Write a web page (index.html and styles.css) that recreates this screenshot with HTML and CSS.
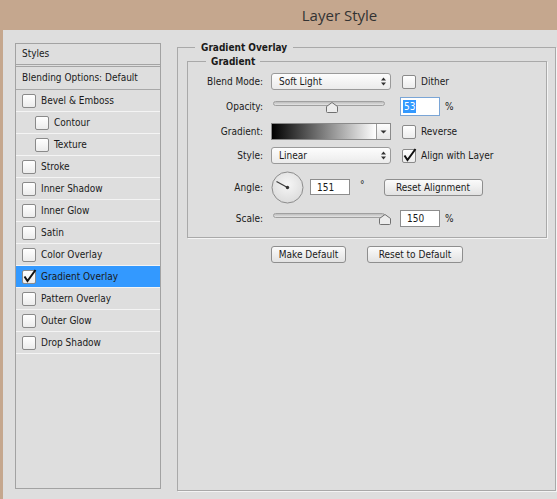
FILE: index.html
```html
<!DOCTYPE html>
<html>
<head>
<meta charset="utf-8" />
<title>Layer Style</title>
<link rel="stylesheet" href="styles.css">
</head>
<body>
<div class="titlebar">Layer Style</div>
<div class="dialog">

<div class="styles-list">
	<div class="list-head">Styles</div>
	<div class="list-blend">Blending Options: Default</div>
	<div class="list-item"><span class="cb"></span>Bevel &amp; Emboss</div>
	<div class="list-item sub"><span class="cb"></span>Contour</div>
	<div class="list-item sub"><span class="cb"></span>Texture</div>
	<div class="list-item"><span class="cb"></span>Stroke</div>
	<div class="list-item"><span class="cb"></span>Inner Shadow</div>
	<div class="list-item"><span class="cb"></span>Inner Glow</div>
	<div class="list-item"><span class="cb"></span>Satin</div>
	<div class="list-item"><span class="cb"></span>Color Overlay</div>
	<div class="list-item selected"><span class="cb"><svg class="tick" width="14" height="14" viewBox="0 0 14 14"><path d="M2.5 6.5 L5.5 11 L13.5 0" /></svg></span>Gradient Overlay</div>
	<div class="list-item"><span class="cb"></span>Pattern Overlay</div>
	<div class="list-item"><span class="cb"></span>Outer Glow</div>
	<div class="list-item"><span class="cb"></span>Drop Shadow</div>
</div>

<div class="main">
<fieldset class="group outer">
	<legend>Gradient Overlay</legend>
	<fieldset class="group inner">
		<legend>Gradient</legend>
		<div class="form">
			<!-- blend mode -->
			<div class="lbl">Blend Mode:</div>
			<div class="select"><span>Soft Light</span>
				<svg width="7" height="9" viewBox="0 0 7 9"><path d="M3.5 0.5 L6 3.5 H1 Z M1 5.5 H6 L3.5 8.5 Z" /></svg></div>
			<div class="opt"><span class="cb"></span>Dither</div>

			<!-- opacity -->
			<div class="lbl">Opacity:</div>
			<div class="slider"><div class="track"></div>
				<svg class="thumb" style="left:53%" width="12" height="11" viewBox="0 0 12 11"><path d="M0.5 4.5 L6 0.5 L11.5 4.5 V9.5 Q11.5 10.5 10.5 10.5 H1.5 Q0.5 10.5 0.5 9.5 Z" /></svg></div>
			<div class="opt"><span class="field tall focus"><span class="sel">53</span></span><span class="unit">%</span></div>

			<!-- gradient -->
			<div class="lbl">Gradient:</div>
			<div class="gradient"><div class="ramp"></div><div class="drop"><svg width="7" height="4" viewBox="0 0 7 4"><path d="M0.5 0.5 H6.5 L3.5 3.5 Z" /></svg></div></div>
			<div class="opt"><span class="cb"></span>Reverse</div>

			<!-- style -->
			<div class="lbl">Style:</div>
			<div class="select"><span>Linear</span>
				<svg width="7" height="9" viewBox="0 0 7 9"><path d="M3.5 0.5 L6 3.5 H1 Z M1 5.5 H6 L3.5 8.5 Z" /></svg></div>
			<div class="opt"><span class="cb"><svg class="tick" width="14" height="14" viewBox="0 0 14 14"><path d="M2.5 6.5 L5.5 11 L13.5 0" /></svg></span>Align with Layer</div>

			<!-- angle -->
			<div class="lbl">Angle:</div>
			<div class="angle">
				<svg class="dial" width="33" height="33" viewBox="0 0 33 33">
					<defs><radialGradient id="dialbg" cx="50%" cy="40%" r="60%"><stop offset="0" stop-color="#f6f6f6" /><stop offset="1" stop-color="#dcdcdc" /></radialGradient></defs>
					<circle cx="16.5" cy="16.5" r="15.5" fill="url(#dialbg)" stroke="#8c8c8c" />
					<line x1="16.5" y1="16.5" x2="5.5" y2="10.4" stroke="#3a3a3a" stroke-width="1.2" />
					<circle cx="16.5" cy="16.5" r="1.7" fill="#333" />
				</svg>
				<span class="field">151</span>
				<span class="deg">°</span>
				<span class="btn reset-align">Reset Alignment</span>
			</div>

			<!-- scale -->
			<div class="lbl">Scale:</div>
			<div class="slider"><div class="track"></div>
				<svg class="thumb" style="left:100%" width="12" height="11" viewBox="0 0 12 11"><path d="M0.5 4.5 L6 0.5 L11.5 4.5 V9.5 Q11.5 10.5 10.5 10.5 H1.5 Q0.5 10.5 0.5 9.5 Z" /></svg></div>
			<div class="opt"><span class="field">150</span><span class="unit">%</span></div>
		</div>
	</fieldset>
	<div class="buttons">
		<span class="btn make-default">Make Default</span>
		<span class="btn reset-default">Reset to Default</span>
	</div>
</fieldset>
</div>

</div>
</body>
</html>
```

FILE: styles.css
```css
html, body {
	margin: 0;
	height: 499px;
	overflow: hidden;
}
body {
	width: 557px;
	display: flex;
	flex-direction: column;
	background: #c5a78e;
	font-family: "DejaVu Sans Condensed", "Liberation Sans", sans-serif;
	font-size: 10px;
	color: #1a1a1a;
}
.titlebar {
	height: 30px;
	flex: none;
	box-sizing: border-box;
	padding-left: 122px;
	display: flex;
	align-items: center;
	justify-content: center;
	font-family: "Open Sans", "Noto Sans", sans-serif;
	font-size: 15px;
	color: #333333;
}
.dialog {
	flex: 1;
	min-height: 0;
	margin-left: 3px;
	background: #dedede;
	display: flex;
	align-items: stretch;
	padding: 13px 0 10px 12px;
}

/* left list */
.styles-list {
	width: 146px;
	box-sizing: border-box;
	border: 1px solid #a2a2a2;
}
.list-head {
	height: 20px;
	line-height: 20px;
	padding-left: 6px;
	border-bottom: 3px double #a4a4a4;
}
.list-blend {
	height: 22px;
	line-height: 22px;
	padding-left: 6px;
	border-bottom: 1px solid #a8a8a8;
}
.list-item {
	height: 21px;
	display: flex;
	align-items: center;
	padding-left: 6px;
	border-bottom: 1px solid #f4f4f4;
}
.list-item.sub {
	padding-left: 19px;
}
.list-item.selected {
	background: #3399ff;
}
.cb {
	width: 14px;
	height: 14px;
	box-sizing: border-box;
	border: 1px solid #8a8a8a;
	border-radius: 2px;
	background: linear-gradient(#ffffff, #ececec);
	margin-right: 5px;
	flex: none;
	position: relative;
}
.tick {
	position: absolute;
	left: -1px;
	top: -1px;
	overflow: visible;
}
.tick path {
	fill: none;
	stroke: #111111;
	stroke-width: 2;
}

/* right side */
.main {
	margin: -2px 0 -2px 16px;
	display: flex;
	flex-direction: column;
}
.group {
	margin: 0;
	border: 1px solid #a9a9a9;
	box-shadow: 1px 1px 0 #f4f4f4;
	min-inline-size: 0;
}
.group legend {
	font-weight: bold;
	line-height: 13px;
}
.outer {
	flex: 1;
	width: 379px;
	box-sizing: border-box;
	padding: 0 8px 0 9px;
}
.outer > legend {
	padding: 0 6px;
	margin-left: 8px;
}
.inner {
	margin-top: 1px;
	padding: 5px 0 10px 0;
}
.inner > legend {
	padding: 0 5px;
	margin-left: 18px;
}
.form {
	display: grid;
	grid-template-columns: 83px 131px 1fr;
	grid-template-rows: 17px 19px 17px 17px 32px 17px;
	row-gap: 7px;
	align-items: center;
}
.lbl {
	text-align: right;
	padding-right: 8px;
}
.select {
	width: 120px;
	height: 17px;
	box-sizing: border-box;
	border: 1px solid #9a9a9a;
	border-radius: 3px;
	background: linear-gradient(#fdfdfd, #ebebeb);
	display: flex;
	align-items: center;
	justify-content: space-between;
	padding: 0 3px 0 7px;
}
.select path,
.drop path {
	fill: #333333;
}
.opt {
	display: flex;
	align-items: center;
}
.slider {
	position: relative;
	height: 19px;
	margin-left: 2px;
	width: 112px;
}
.track {
	margin-top: 4px;
	height: 5px;
	box-sizing: border-box;
	border: 1px solid #a0a0a0;
	border-radius: 3px;
	background: linear-gradient(#bdbdbd, #e4e4e4);
}
.thumb {
	position: absolute;
	top: 5px;
	margin-left: -6px;
}
.thumb path {
	fill: #ececec;
	stroke: #707070;
}
.field {
	width: 40px;
	height: 17px;
	box-sizing: border-box;
	border: 1px solid #8d8d8d;
	background: #ffffff;
	padding-left: 6px;
	display: flex;
	align-items: center;
	flex: none;
}
.opt .field {
	margin-left: -2px;
}
.field.tall {
	height: 19px;
}
.field.focus {
	border-color: #7aa5d6;
	padding-left: 2px;
}
.sel {
	background: #3399ff;
	color: #ffffff;
	padding: 1px 1px;
}
.unit {
	margin-left: 5px;
}
.gradient {
	width: 120px;
	height: 17px;
	box-sizing: border-box;
	border: 1px solid #8a8a8a;
	display: flex;
}
.ramp {
	flex: 1;
	background: linear-gradient(to right, #000000, #ffffff);
}
.drop {
	width: 13px;
	border-left: 1px solid #9a9a9a;
	background: linear-gradient(#fdfdfd, #e6e6e6);
	display: flex;
	align-items: center;
	justify-content: center;
}
.angle {
	grid-column: 2 / 4;
	display: flex;
	align-items: center;
}
.angle .field {
	margin-left: 6px;
	height: 16px;
}
.deg {
	margin: -5px 0 0 10px;
}
.btn {
	height: 17px;
	box-sizing: border-box;
	border: 1px solid #8e8e8e;
	border-radius: 3px;
	background: linear-gradient(#fbfbfb, #e2e2e2);
	display: flex;
	align-items: center;
	justify-content: center;
	flex: none;
}
.reset-align {
	width: 99px;
	margin-left: 19px;
}
.buttons {
	margin-top: 8px;
	display: flex;
	justify-content: center;
	gap: 21px;
}
.make-default {
	width: 75px;
}
.reset-default {
	width: 96px;
}
```
